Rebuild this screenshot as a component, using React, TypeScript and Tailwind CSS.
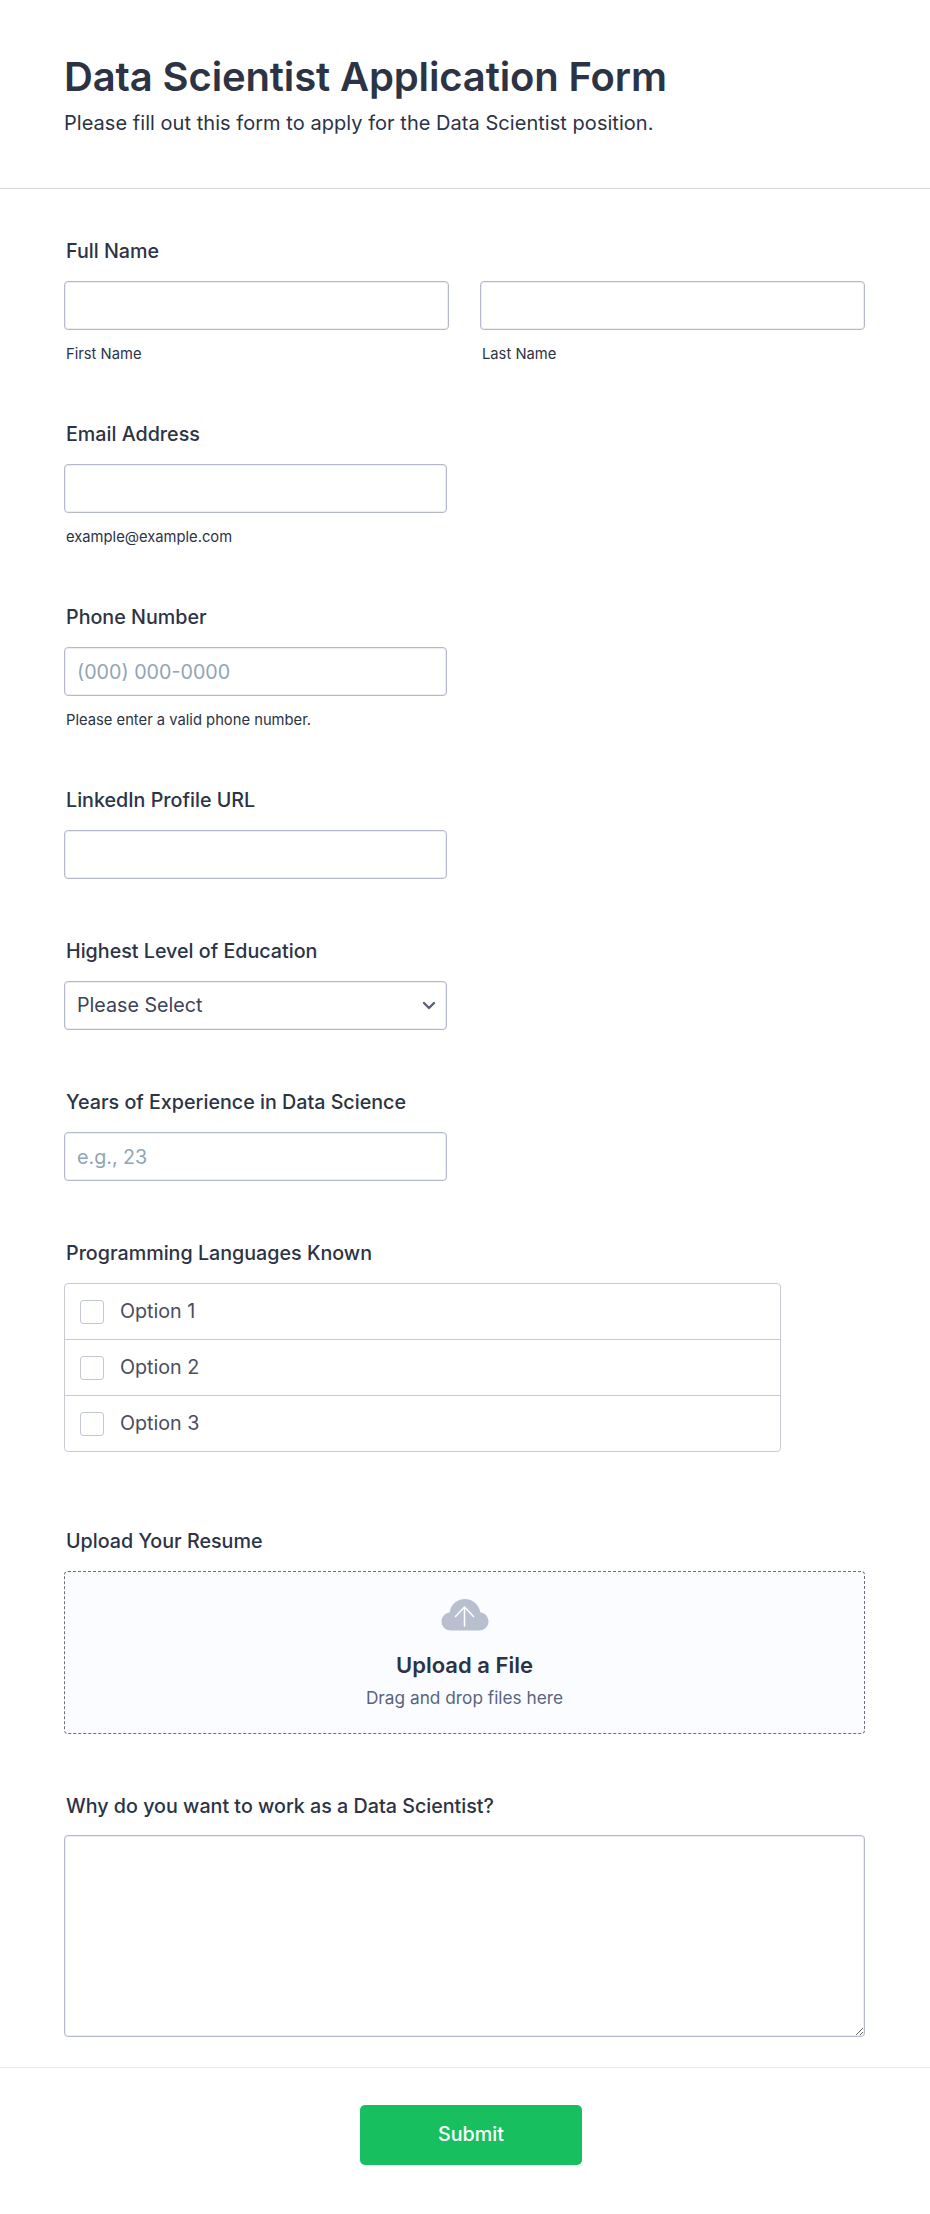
import React from "react";

const inputCls =
  "block h-[49px] w-full rounded-[4px] border border-[#b4b9cc] bg-white px-[12px] text-[19.7px] text-[#2c3345] shadow-[inset_0_0_0_1px_#eceef4] outline-none placeholder:text-[#8fa5b5]";

function Label({ children, mb }: { children: React.ReactNode; mb: string }) {
  return (
    <label className={`${mb} block pl-[2px] text-[19.7px] font-medium leading-[28px] text-[#2c3345]`}>
      {children}
    </label>
  );
}

function Sub({ children }: { children: React.ReactNode }) {
  return <div className="mt-[14px] pl-[2px] text-[14.75px] leading-[20px] text-[#2c3345]">{children}</div>;
}

function Check({ label, last }: { label: string; last?: boolean }) {
  return (
    <div className={`flex items-center gap-[16px] pl-[15px] ${last ? "h-[55px]" : "h-[56px] border-b border-[#c8cbd4]"}`}>
      <span className="h-[24px] w-[24px] rounded-[3px] border border-[#c4c8d4] bg-white" />
      <span className="text-[19.7px] text-[#4a4d5e]">{label}</span>
    </div>
  );
}

export default function App() {
  return (
    <div className="min-h-[2214px] bg-white font-['Inter',sans-serif] text-[#2c3345]">
      <header className="h-[189px] border-b border-[#d8dae2] px-[64px] pt-[50px]">
        <h1 className="text-[40px] font-semibold leading-[54px] tracking-[-0.13px]">Data Scientist Application Form</h1>
        <p className="mt-[4px] text-[20px] leading-[30px] tracking-[0.04px]">Please fill out this form to apply for the Data Scientist position.</p>
      </header>

      <main className="px-[64px]">
        <section className="pt-[48px]">
          <Label mb="mb-[16px]">Full Name</Label>
          <div className="flex w-[801px] gap-[31px]">
            <div className="w-[385px]">
              <input className={inputCls} />
              <Sub>First Name</Sub>
            </div>
            <div className="w-[385px]">
              <input className={inputCls} />
              <Sub>Last Name</Sub>
            </div>
          </div>
        </section>

        <section className="mt-[56px] w-[383px]">
          <Label mb="mb-[16px]">Email Address</Label>
          <input className={inputCls} />
          <Sub>example@example.com</Sub>
        </section>

        <section className="mt-[56px] w-[383px]">
          <Label mb="mb-[16px]">Phone Number</Label>
          <input className={inputCls} placeholder="(000) 000-0000" />
          <Sub>Please enter a valid phone number.</Sub>
        </section>

        <section className="mt-[56px] w-[383px]">
          <Label mb="mb-[16px]">LinkedIn Profile URL</Label>
          <input className={inputCls} />
        </section>

        <section className="mt-[58px] w-[383px]">
          <Label mb="mb-[16px]">Highest Level of Education</Label>
          <div className="relative">
            <select className={`${inputCls} appearance-none text-[#3d4258]`}>
              <option>Please Select</option>
            </select>
            <svg className="absolute right-[10px] top-[16px] h-[16px] w-[16px]" viewBox="0 0 16 16" fill="none" stroke="#5a5f73" strokeWidth="2.4" strokeLinecap="round" strokeLinejoin="round">
              <path d="M3 6l5 5 5-5" />
            </svg>
          </div>
        </section>

        <section className="mt-[58px] w-[383px]">
          <Label mb="mb-[16px]">Years of Experience in Data Science</Label>
          <input className={inputCls} placeholder="e.g., 23" />
        </section>

        <section className="mt-[58px]">
          <Label mb="mb-[16px]">Programming Languages Known</Label>
          <div className="w-[717px] rounded-[4px] border border-[#c8cbd4] bg-white">
            <Check label="Option 1" />
            <Check label="Option 2" />
            <Check label="Option 3" last />
          </div>
        </section>

        <section className="mt-[75px]">
          <Label mb="mb-[16px]">Upload Your Resume</Label>
          <div className="flex h-[163px] w-[801px] flex-col items-center rounded-[4px] border border-dashed border-[#6b6e7c] bg-[#fbfcff] pt-[26px]">
            <svg className="h-[34px] w-[48px]" viewBox="0 0 48 34" fill="none">
              <path d="M10 32.5C4.5 32.5 0.5 28.6 0.5 23.5 0.5 18.8 4 15 8.6 14.5 9.8 6.6 16 1 24 1c7.6 0 14 5.5 15.3 13.2 4.7.7 8.2 4.5 8.2 9.3 0 5.1-4 9-9.5 9z" fill="#b8bfce" />
              <path d="M23.5 28V9M14.5 18.5L23.5 9l9 9.5" stroke="#ffffff" strokeWidth="1.5" strokeLinecap="round" strokeLinejoin="round" />
            </svg>
            <div className="mt-[18px] text-[22px] font-semibold leading-[30px] text-[#2c3345]">Upload a File</div>
            <div className="mt-[5px] text-[17.25px] leading-[26px] text-[#57647e]">Drag and drop files here</div>
          </div>
        </section>

        <section className="mt-[58px]">
          <Label mb="mb-[15px]">Why do you want to work as a Data Scientist?</Label>
          <textarea className="block h-[202px] w-[801px] rounded-[4px] border border-[#b4b9cc] bg-white shadow-[inset_0_0_0_1px_#eceef4] outline-none" />
        </section>
      </main>

      <footer className="mt-[30px] flex justify-center border-t border-[#e9e9f0] pb-[50px] pl-[12px] pt-[37px]">
        <button className="h-[60px] w-[222px] rounded-[5px] bg-[#18bf5f] text-[19.7px] font-medium text-white">Submit</button>
      </footer>
    </div>
  );
}
